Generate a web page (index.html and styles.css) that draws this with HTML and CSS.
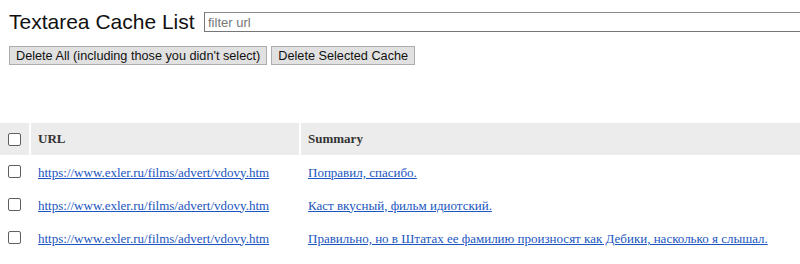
FILE: index.html
```html
<!DOCTYPE html>
<html lang="en">
  <head>
    <meta charset="UTF-8" />
    <title>Textarea Cache List</title>
    <link rel="stylesheet" href="styles.css">
  </head>
  <body>
    <div class="top">
      <div class="title-row">
        <h1>Textarea Cache List</h1>
        <input type="text" class="filter" placeholder="filter url" />
      </div>
      <div class="actions">
        <button>Delete All (including those you didn't select)</button>
        <button>Delete Selected Cache</button>
      </div>
    </div>

    <table class="cache-table">
      <thead>
        <tr>
          <th class="check"><span class="box"></span></th>
          <th class="url">URL</th>
          <th>Summary</th>
        </tr>
      </thead>
      <tbody>
        <tr>
          <td class="check"><span class="box"></span></td>
          <td><a href="#">https://www.exler.ru/films/advert/vdovy.htm</a></td>
          <td><a href="#">Поправил, спасибо.</a></td>
        </tr>
        <tr>
          <td class="check"><span class="box"></span></td>
          <td><a href="#">https://www.exler.ru/films/advert/vdovy.htm</a></td>
          <td><a href="#">Каст вкусный, фильм идиотский.</a></td>
        </tr>
        <tr>
          <td class="check"><span class="box"></span></td>
          <td><a href="#">https://www.exler.ru/films/advert/vdovy.htm</a></td>
          <td><a href="#">Правильно, но в Штатах ее фамилию произносят как Дебики, насколько я слышал.</a></td>
        </tr>
      </tbody>
    </table>
  </body>
</html>
```

FILE: styles.css
```css
* {
  box-sizing: border-box;
}

body {
  margin: 0;
  width: 800px;
  overflow: hidden;
  font-family: "Liberation Serif", "Times New Roman", serif;
  font-size: 13px;
  color: #222;
  background: #fff;
}

.top {
  padding: 9px 0 0 9px;
  font-family: "Liberation Sans", Arial, sans-serif;
}

.title-row {
  display: flex;
  align-items: center;
  height: 26px;
}

h1 {
  margin: 0;
  font-size: 21px;
  font-weight: normal;
  color: #111;
  width: 195px;
  flex-shrink: 0;
  white-space: nowrap;
}

/* runs on past the window in the original, so no right border */
.filter {
  flex: 1;
  height: 20px;
  padding: 1px 3px;
  border: 1px solid #767676;
  border-right: none;
  border-top-color: #8a8a8a;
  font-family: "Liberation Sans", Arial, sans-serif;
  font-size: 13px;
}

.filter::placeholder {
  color: #777;
}

.actions {
  display: flex;
  gap: 4px;
  margin-top: 11px;
}

button {
  height: 19px;
  padding: 0 6px;
  background: #e1e1e1;
  border: 1px solid #adadad;
  border-radius: 0;
  font-family: "Liberation Sans", Arial, sans-serif;
  font-size: 12.7px;
  color: #111;
}

.cache-table {
  margin-top: 58px;
  width: 800px;
  border-spacing: 0;
}

.cache-table th {
  background: #ececec;
  height: 32px;
  padding: 0 7px;
  text-align: left;
  font-size: 13px;
  color: #333;
}

.cache-table th + th,
.cache-table td + td {
  border-left: 2px solid #fff;
}

.cache-table th.url {
  width: 270px;
}

.cache-table td {
  height: 33px;
  padding: 2px 7px 0;
}

.cache-table .check {
  width: 29px;
  padding: 0 0 0 8px;
}

.box {
  display: block;
  width: 13px;
  height: 13px;
  border: 1px solid #5f5f5f;
  border-radius: 2px;
  background: #fff;
}

a {
  color: #1a55c0;
}
```
